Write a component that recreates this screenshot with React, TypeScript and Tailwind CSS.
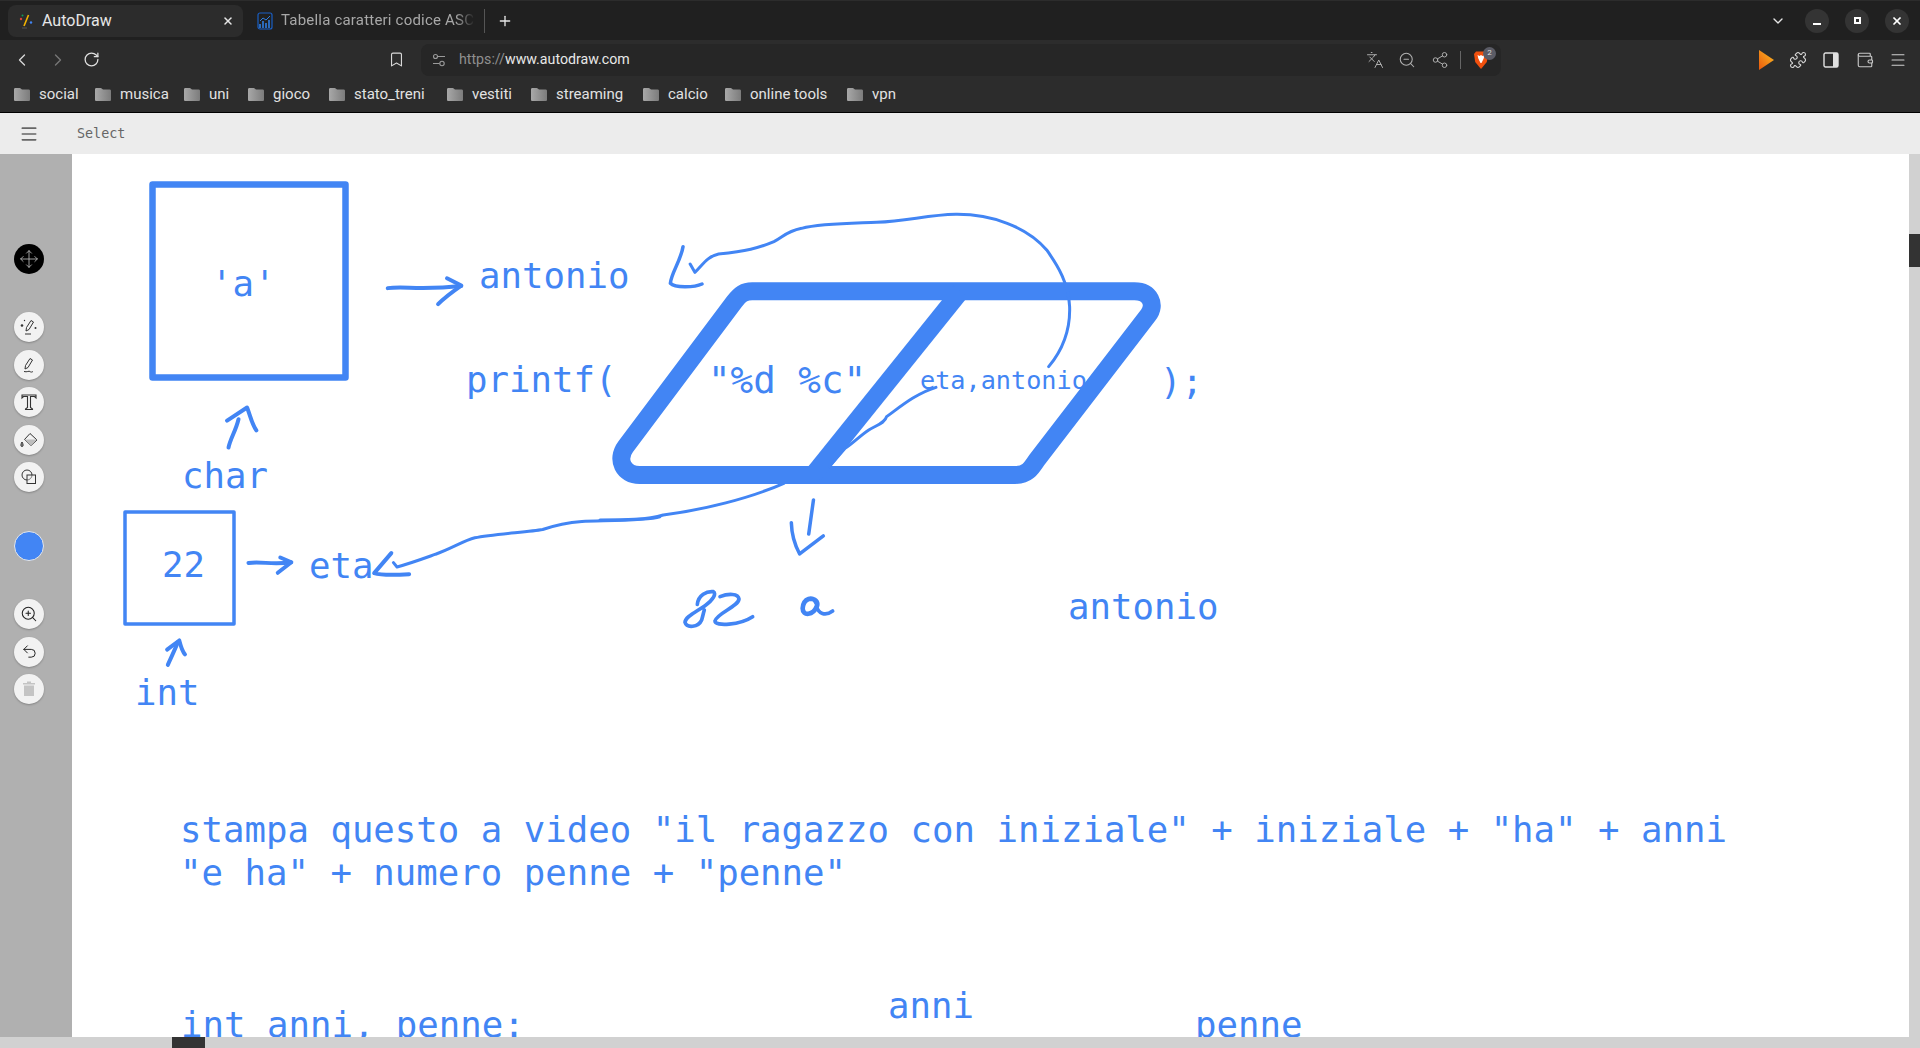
import * as React from 'react';
import {
  Bookmark,
  ChevronDown,
  ChevronLeft,
  ChevronRight,
  Languages,
  Menu,
  Move,
  Plus,
  Puzzle,
  RotateCw,
  Share2,
  Undo2,
  Wallet,
  X,
  ZoomIn,
  ZoomOut,
} from 'lucide-react';

const folders = [
  { name: 'social', width: 'w-[81px]' },
  { name: 'musica', width: 'w-[89px]' },
  { name: 'uni', width: 'w-[64px]' },
  { name: 'gioco', width: 'w-[81px]' },
  { name: 'stato_treni', width: 'w-[118px]' },
  { name: 'vestiti', width: 'w-[84px]' },
  { name: 'streaming', width: 'w-[112px]' },
  { name: 'calcio', width: 'w-[82px]' },
  { name: 'online tools', width: 'w-[122px]' },
  { name: 'vpn', width: 'w-[60px]' },
];

function Folder() {
  return (
    <svg width="18" height="14" viewBox="0 0 18 14" className="mr-[8px] shrink-0">
      <defs>
        <linearGradient id="folderFill" x1="0" x2="1" y1="0" y2="0">
          <stop offset="0" stopColor="#a8a8a8" />
          <stop offset="1" stopColor="#7c7c7c" />
        </linearGradient>
      </defs>
      <path d="M1 2.5C1 1.5 1.5 1 2.5 1H7l2 1.5h6.5c1 0 1.5.5 1.5 1.5v8.5c0 1-.5 1.5-1.5 1.5h-13C1.5 14 1 13.5 1 12.5z" fill="url(#folderFill)" />
    </svg>
  );
}

function TabBar() {
  return (
    <div className="flex h-[40px] items-center border-t border-[#2c2c2c] bg-[#202020] pl-[8px]">
      <div className="flex h-[32px] w-[235px] items-center rounded-[8px] bg-[#2c2c2c] pl-[11px] text-[16px] text-[#e6e6e6]">
        <svg width="14" height="16" viewBox="0 0 14 16" className="mr-[9px] shrink-0">
          <path d="M9.5 2L5 13" stroke="#f4b400" strokeWidth="1.6" />
          <circle cx="2" cy="6" r="1.2" fill="#db4437" />
          <circle cx="12" cy="9.5" r="1.2" fill="#4285f4" />
          <circle cx="3.5" cy="2.5" r="1" fill="#0f9d58" />
          <path d="M3 15h5" stroke="#555" strokeWidth="1" />
        </svg>
        <span>AutoDraw</span>
        <X size={12} strokeWidth={3} className="ml-auto mr-[9px] text-[#e6e6e6]" />
      </div>
      <svg width="16" height="18" viewBox="0 0 16 18" className="ml-[14px] mr-[8px] shrink-0">
        <rect x="1" y="1" width="14" height="16" rx="2" fill="none" stroke="#1a5fc4" strokeWidth="1.2" />
        <path d="M3 16v-4M6 16v-7M9 16v-5M12 16v-8" stroke="#2f7de1" strokeWidth="1.6" />
        <path d="M3 9l3-3 3 2 4-4" stroke="#2f7de1" strokeWidth="1" fill="none" />
      </svg>
      <span className="w-[194px] overflow-hidden whitespace-nowrap text-[15px] tracking-[0.2px] text-[#a8a8a8] [mask-image:linear-gradient(to_right,black_90%,transparent)]">Tabella caratteri codice ASCII</span>
      <div className="ml-[9px] h-[24px] w-px bg-[#555555]" />
      <Plus size={16} strokeWidth={2} className="ml-[12px] text-[#e6e6e6]" />
      <ChevronDown size={16} strokeWidth={2} className="ml-auto mr-[19px] text-[#e6e6e6]" />
      <div className="mr-[16px] flex h-[24px] w-[24px] items-center justify-center rounded-full bg-[#343434]">
        <div className="mt-[6px] h-[2px] w-[8px] bg-white" />
      </div>
      <div className="mr-[16px] flex h-[24px] w-[24px] items-center justify-center rounded-full bg-[#343434]">
        <div className="h-[7px] w-[7px] border-2 border-white" />
      </div>
      <div className="mr-[11px] flex h-[24px] w-[24px] items-center justify-center rounded-full bg-[#343434]">
        <X size={12} strokeWidth={3.5} className="text-white" />
      </div>
    </div>
  );
}

function AddressRow() {
  return (
    <div className="flex h-[39px] items-center pl-[12px] text-[#c8c8c8]">
      <ChevronLeft size={20} strokeWidth={1.6} className="text-[#d8d8d8]" />
      <ChevronRight size={20} strokeWidth={1.6} className="ml-[16px] text-[#777777]" />
      <RotateCw size={17} strokeWidth={1.8} className="ml-[15px] text-[#e0e0e0]" />
      <Bookmark size={17} strokeWidth={1.6} className="ml-[288px] text-[#d8d8d8]" />
      <div className="ml-[16px] flex h-[32px] w-[1080px] items-center rounded-[8px] bg-[#262626] pl-[11px] pr-[10px]">
        <svg width="14" height="14" viewBox="0 0 14 14" className="shrink-0 text-[#9a9a9a]" fill="none" stroke="currentColor" strokeWidth="1.1">
          <circle cx="3.5" cy="3.5" r="2" />
          <path d="M6 3.5h7M1 10.5h6.5" />
          <circle cx="10" cy="10.5" r="2.2" />
        </svg>
        <span className="ml-[13px] text-[14.2px] text-[#8f8f8f]">
          https://<span className="text-[#e8e8e8]">www.autodraw.com</span>
        </span>
        <Languages size={18} strokeWidth={1.3} className="ml-auto mr-[-2px] text-[#b0b0b0]" />
        <ZoomOut size={18} strokeWidth={1.4} className="ml-[16px] mr-[-1px] text-[#b0b0b0]" />
        <Share2 size={18} strokeWidth={1.3} className="ml-[16px] mr-[-1px] text-[#b0b0b0]" />
        <div className="ml-[12px] h-[18px] w-px bg-[#666666]" />
        <div className="relative ml-[12px] mr-[2px]">
          <svg width="16" height="20" viewBox="0 0 16 20" className="block">
            <path d="M3 1.5h10l2 2.5-1.2 8L8 19 2.2 12 1 4z" fill="#f1500e" />
            <path d="M4.5 5l2 1 1.5-1 1.5 1 2-1-.8 3.5L8.5 13h-1L5.3 8.5z" fill="#ffffff" />
          </svg>
          <div className="absolute -right-[7px] -top-[3px] flex h-[13px] w-[13px] items-center justify-center rounded-full bg-[#5b5c66] text-[8px] text-[#dddddd]">2</div>
        </div>
      </div>
      <svg width="15" height="20" viewBox="0 0 15 20" className="ml-[258px] shrink-0">
        <defs>
          <linearGradient id="playFill" x1="0" x2="1" y1="1" y2="0">
            <stop offset="0" stopColor="#ea580c" />
            <stop offset="1" stopColor="#fbbf24" />
          </linearGradient>
        </defs>
        <path d="M0 0l15 10L0 20z" fill="url(#playFill)" />
      </svg>
      <Puzzle size={18} strokeWidth={1.5} className="ml-[15px] text-[#d8d8d8]" />
      <svg width="16" height="16" viewBox="0 0 16 16" className="ml-[16px] shrink-0">
        <rect x="1" y="1" width="14" height="14" rx="1.5" fill="none" stroke="#e0e0e0" strokeWidth="1.4" />
        <rect x="10" y="1" width="5" height="14" fill="#e0e0e0" />
      </svg>
      <Wallet size={18} strokeWidth={1.5} className="ml-[17px] text-[#c8c8c8]" />
      <Menu size={18} strokeWidth={1.4} className="ml-[15px] text-[#d0d0d0]" />
    </div>
  );
}

function BookmarksRow() {
  return (
    <div className="flex h-[34px] items-center border-b border-black pb-[3px] pl-[13px] text-[15px] text-[#e2e2e2]">
      {folders.map((folder) => (
        <div key={folder.name} className={`flex items-center ${folder.width}`}>
          <Folder />
          <span>{folder.name}</span>
        </div>
      ))}
    </div>
  );
}

function ToolButton({ children, dim }: { children: React.ReactNode; dim?: boolean }) {
  return (
    <div className={`flex h-[30px] w-[30px] items-center justify-center rounded-full bg-[#f2f2f2] shadow-[0_1px_2px_rgba(0,0,0,0.25)] ${dim ? 'text-[#c4c4c4]' : 'text-[#333333]'}`}>
      {children}
    </div>
  );
}

function Sidebar() {
  return (
    <aside className="flex w-[72px] shrink-0 flex-col items-center bg-[#b0b0b0] pr-[14px] pt-[90px]">
      <div className="flex h-[30px] w-[30px] items-center justify-center rounded-full bg-black text-[#bdbdbd]">
        <Move size={20} strokeWidth={1} />
      </div>
      <div className="mt-[38px] flex flex-col gap-[7.5px]">
        <ToolButton>
          <svg width="20" height="20" viewBox="0 0 20 20" fill="none" stroke="currentColor" strokeWidth="1">
            <path d="M7 14l.5-3.5L12 3.5l2.5 1.5L10 12.5z" />
            <path d="M6 17h6" />
            <circle cx="3" cy="8.5" r="1.3" fill="currentColor" stroke="none" />
            <circle cx="16.5" cy="11" r="1" fill="currentColor" stroke="none" />
            <circle cx="5.5" cy="3.5" r=".7" fill="currentColor" stroke="none" />
          </svg>
        </ToolButton>
        <ToolButton>
          <svg width="20" height="20" viewBox="0 0 20 20" fill="none" stroke="currentColor" strokeWidth="1">
            <path d="M6 14l.5-3.5L11 3.5l2.5 1.5L9 12.5z" />
            <path d="M5 16.5c3 1 5-1 6 0s2 .5 3 0" />
          </svg>
        </ToolButton>
        <ToolButton>
          <svg width="20" height="20" viewBox="0 0 20 20" fill="none" stroke="currentColor" strokeWidth="1.1">
            <path d="M3 6V3h14v3l-1.5-1.5H11.5v11l2 1.5v.5h-7V17l2-1.5v-11H4.5z" />
          </svg>
        </ToolButton>
        <ToolButton>
          <svg width="20" height="20" viewBox="0 0 20 20" fill="none" stroke="currentColor" strokeWidth="1">
            <path d="M11 3.5L18 10l-6 5.5L5.5 9.5z" />
            <path d="M5.5 9.5H18l-6 6z" fill="#bdbdbd" stroke="none" />
            <path d="M3 12c-1.5 2.5-1.5 4.5 0 4.5s1.5-2 0-4.5z" fill="#999999" />
          </svg>
        </ToolButton>
        <ToolButton>
          <svg width="20" height="20" viewBox="0 0 20 20" fill="none" stroke="currentColor" strokeWidth="1">
            <circle cx="8" cy="8" r="5" />
            <rect x="8" y="8" width="8.5" height="8.5" fill="#f2f2f2" fillOpacity="0.4" />
          </svg>
        </ToolButton>
      </div>
      <div className="mt-[39px] h-[30px] w-[30px] rounded-full border border-[#e8e8e8] bg-[#4285f4]" />
      <div className="mt-[38px] flex flex-col gap-[7.5px]">
        <ToolButton><ZoomIn size={18} strokeWidth={1.4} className="text-[#222222]" /></ToolButton>
        <ToolButton><Undo2 size={17} strokeWidth={1.4} className="text-[#222222]" /></ToolButton>
        <ToolButton dim>
          <svg width="14" height="16" viewBox="0 0 14 16" fill="currentColor">
            <path d="M1 2h12v1.5H1zM5 .5h4V2H5zM2 4.5h10V15H2z" />
          </svg>
        </ToolButton>
      </div>
    </aside>
  );
}

function Drawing() {
  return (
    <svg viewBox="72 154 1837 883" className="absolute inset-0 h-full w-full" fill="none" stroke="#4285f4" strokeLinecap="round" strokeLinejoin="round">
      <rect x="152.5" y="184.5" width="193" height="193" strokeWidth="6.5" />
      <rect x="125" y="512" width="109" height="112" strokeWidth="3.5" />

      <g transform="translate(100 160) scale(0.357 0.364)">
        <path vectorEffect="non-scaling-stroke" strokeWidth="4" d="M806 352C850 346 900 358 1012 346" />
        <path vectorEffect="non-scaling-stroke" strokeWidth="4" d="M972 325L1012 345C990 360 965 378 947 396" />
        <path vectorEffect="non-scaling-stroke" strokeWidth="4" d="M360 790C365 765 380 745 388 712" />
        <path vectorEffect="non-scaling-stroke" strokeWidth="4" d="M356 716L412 680C420 700 425 725 438 743" />
        <path vectorEffect="non-scaling-stroke" strokeWidth="4" d="M416 1107C450 1103 490 1112 535 1105" />
        <path vectorEffect="non-scaling-stroke" strokeWidth="4" d="M505 1092L536 1105L498 1134" />
        <path vectorEffect="non-scaling-stroke" strokeWidth="4" d="M190 1387C200 1365 210 1345 218 1325" />
        <path vectorEffect="non-scaling-stroke" strokeWidth="4" d="M188 1345L222 1320C226 1335 230 1350 238 1358" />
        <path vectorEffect="non-scaling-stroke" strokeWidth="4" d="M816 1080L768 1135C790 1142 830 1140 866 1138" />
        <path vectorEffect="non-scaling-stroke" strokeWidth="3" d="M1568 980C1530 992 1400 990 1350 993C1310 996 1270 1005 1240 1015C1200 1022 1100 1028 1050 1038C1020 1045 980 1070 940 1083C900 1097 870 1108 832 1118L822 1106" />
      </g>

      <g transform="translate(600 190) scale(0.3953 0.3333)">
        <path vectorEffect="non-scaling-stroke" strokeWidth="3" d="M465 880C380 925 260 960 160 975C120 990 60 990 0 990" />
        <path vectorEffect="non-scaling-stroke" strokeWidth="18" d="M385 304H1352C1392 304 1407 345 1387 375L1105 810C1090 837 1080 855 1050 855H100C60 855 40 810 65 770L340 335C355 312 365 304 385 304Z" />
        <path vectorEffect="non-scaling-stroke" strokeWidth="18" strokeLinecap="butt" d="M912 304L540 853" />
        <path vectorEffect="non-scaling-stroke" strokeWidth="3" d="M1135 530C1170 480 1190 420 1188 350C1185 280 1160 230 1130 180C1080 110 990 72 900 73C830 75 780 92 700 97C640 100 560 100 510 115C470 125 465 140 440 155C400 175 370 183 300 192C270 200 260 225 240 247L228 222" />
        <path vectorEffect="non-scaling-stroke" strokeWidth="3.5" d="M210 170C205 210 180 250 178 280C190 295 240 292 258 282" />
        <path vectorEffect="non-scaling-stroke" strokeWidth="3" d="M850 592C800 610 760 650 725 680C720 700 700 705 680 720C660 735 640 760 620 775L580 830" />
        <path vectorEffect="non-scaling-stroke" strokeWidth="3.5" d="M540 930L528 1032" />
        <path vectorEffect="non-scaling-stroke" strokeWidth="3.5" d="M484 998C485 1040 495 1070 505 1092L565 1038" />
      </g>

      <g transform="translate(670 575) scale(0.3333)">
        <path strokeWidth="11" d="M82 88C85 60 110 48 130 50C140 55 130 75 105 92C80 110 45 125 45 142C50 160 85 158 95 135C98 125 100 115 103 105" />
        <path strokeWidth="11" d="M150 65C175 55 205 55 207 72C205 95 140 115 135 138C135 155 210 150 248 125" />
        <path strokeWidth="14" d="M440 85C430 60 400 70 398 100C398 125 430 120 440 95C445 85 440 72 425 72" />
        <path strokeWidth="11" d="M440 95C445 115 465 125 488 108" />
      </g>
    </svg>
  );
}

function Canvas() {
  const text = 'absolute whitespace-pre text-[35.7px] leading-none text-[#4285f4]';
  return (
    <div className="relative flex-1 overflow-hidden bg-white font-['DejaVu_Sans_Mono',monospace]">
      <Drawing />
      <span className={`${text} left-[139px] top-[112px]`}>'a'</span>
      <span className={`${text} left-[407px] top-[104px]`}>antonio</span>
      <span className={`${text} left-[394px] top-[208px]`}>printf(</span>
      <span className={`${text} left-[110px] top-[304px]`}>char</span>
      <span className={`${text} left-[90px] top-[393px]`}>22</span>
      <span className={`${text} left-[237px] top-[394px]`}>eta</span>
      <span className={`${text} left-[63px] top-[521px]`}>int</span>
      <span className="absolute left-[636px] top-[208px] whitespace-pre text-[37.5px] leading-none text-[#4285f4]">"%d %c"</span>
      <span className={`${text} left-[1088px] top-[210px]`}>);</span>
      <span className={`${text} left-[996px] top-[435px]`}>antonio</span>
      <span className="absolute left-[848px] top-[214px] whitespace-pre text-[25.2px] leading-none text-[#4285f4]">eta,antonio</span>
      <p className="absolute left-[108px] top-[654px] whitespace-pre text-[35.7px] leading-[43px] text-[#4285f4]">
        {'stampa questo a video "il ragazzo con iniziale" + iniziale + "ha" + anni\n"e ha" + numero penne + "penne"'}
      </p>
      <span className={`${text} left-[109px] top-[853px]`}>int anni, penne:</span>
      <span className={`${text} left-[816px] top-[834px]`}>anni</span>
      <span className={`${text} left-[1123px] top-[853px]`}>penne</span>
    </div>
  );
}

export default function App() {
  return (
    <div className="flex h-[1048px] w-[1920px] flex-col overflow-hidden bg-white font-['Roboto',sans-serif]">
      <TabBar />
      <div className="bg-[#2c2c2c]">
        <AddressRow />
        <BookmarksRow />
      </div>
      <div className="flex h-[41px] shrink-0 items-center bg-[#ececec] pl-[19px]">
        <Menu size={20} strokeWidth={2} className="text-[#666666]" />
        <span className="ml-[38px] pt-[2px] font-['DejaVu_Sans_Mono',monospace] text-[13.4px] text-[#666666]">Select</span>
      </div>
      <div className="flex min-h-0 flex-1">
        <Sidebar />
        <Canvas />
        <div className="w-[11px] shrink-0 bg-[#d1d1d1]">
          <div className="mt-[80px] h-[33px] w-full bg-[#333333]" />
        </div>
      </div>
      <div className="h-[11px] shrink-0 bg-[#d1d1d1]">
        <div className="ml-[172px] h-full w-[33px] bg-[#333333]" />
      </div>
    </div>
  );
}
